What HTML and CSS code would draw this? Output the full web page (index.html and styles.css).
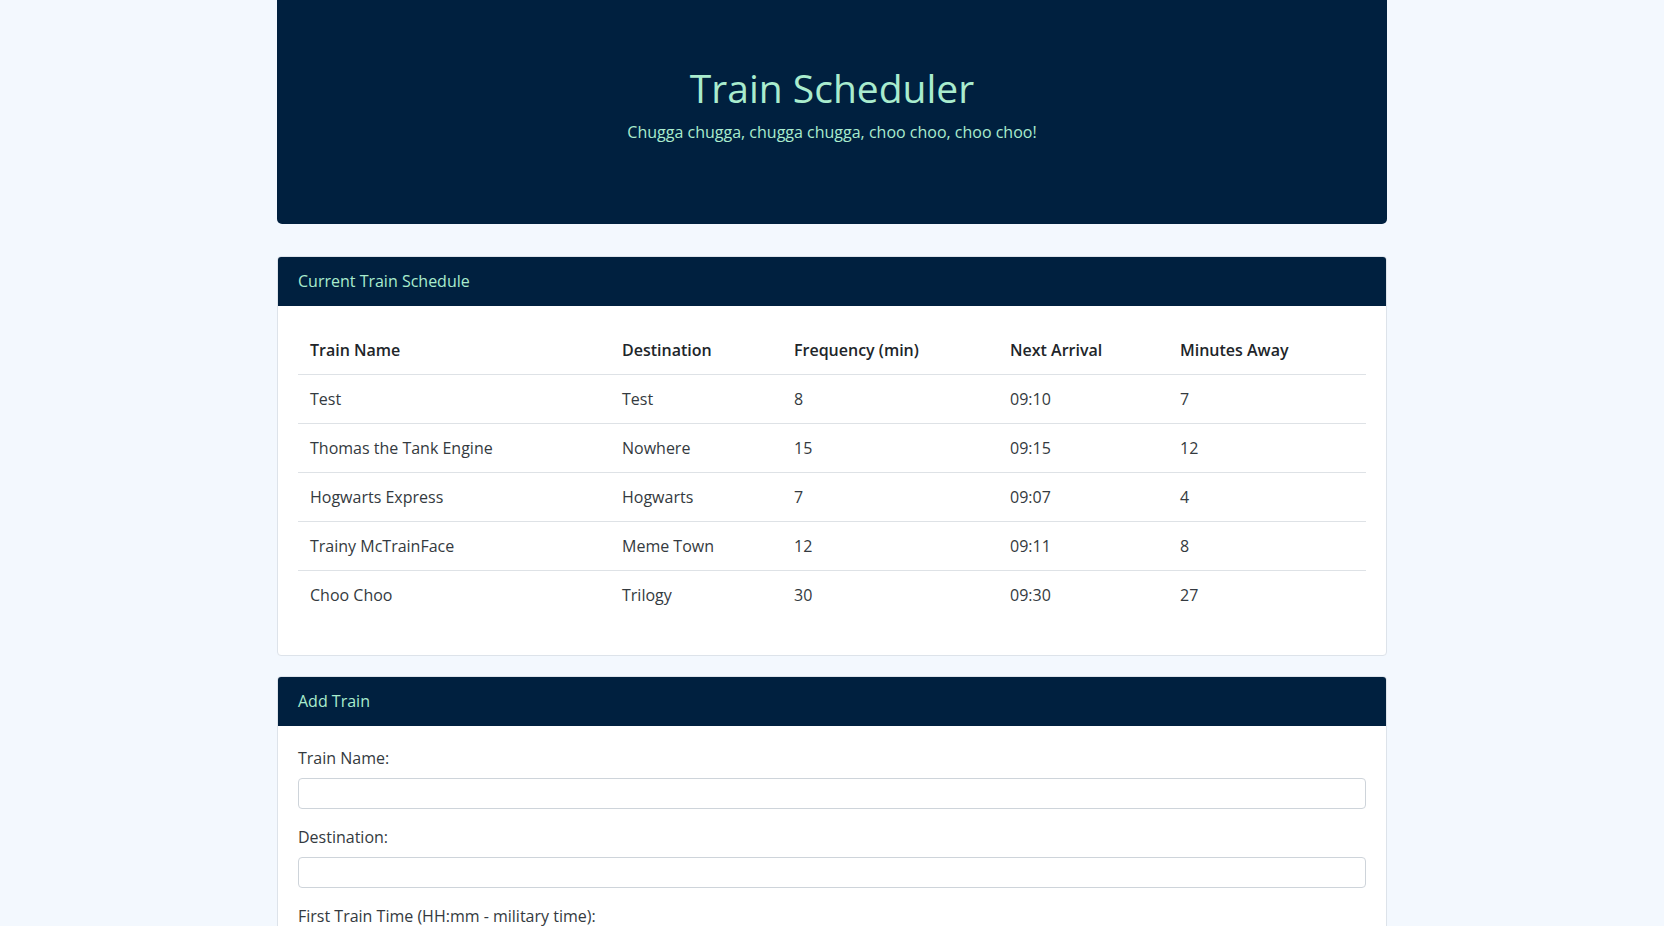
FILE: index.html
```html
<!DOCTYPE html>
<html lang="en">
<head>
<meta charset="utf-8">
<title>Train Scheduler</title>
<link rel="stylesheet" href="styles.css">
</head>
<body>
<div class="container">
  <header class="jumbotron">
    <h1 class="jumbo-title">Train Scheduler</h1>
    <p class="jumbo-lead">Chugga chugga, chugga chugga, choo choo, choo choo!</p>
  </header>

  <section class="card">
    <div class="card-header">Current Train Schedule</div>
    <div class="card-body">
      <table class="schedule">
        <colgroup>
          <col class="c1"><col class="c2"><col class="c3"><col class="c4"><col class="c5">
        </colgroup>
        <thead>
          <tr><th>Train Name</th><th>Destination</th><th>Frequency (min)</th><th>Next Arrival</th><th>Minutes Away</th></tr>
        </thead>
        <tbody>
          <tr><td>Test</td><td>Test</td><td>8</td><td>09:10</td><td>7</td></tr>
          <tr><td>Thomas the Tank Engine</td><td>Nowhere</td><td>15</td><td>09:15</td><td>12</td></tr>
          <tr><td>Hogwarts Express</td><td>Hogwarts</td><td>7</td><td>09:07</td><td>4</td></tr>
          <tr><td>Trainy McTrainFace</td><td>Meme Town</td><td>12</td><td>09:11</td><td>8</td></tr>
          <tr><td>Choo Choo</td><td>Trilogy</td><td>30</td><td>09:30</td><td>27</td></tr>
        </tbody>
      </table>
    </div>
  </section>

  <section class="card">
    <div class="card-header">Add Train</div>
    <div class="card-body">
      <form class="train-form">
        <div class="form-group">
          <label for="name">Train Name:</label>
          <input id="name" class="form-control" type="text">
        </div>
        <div class="form-group">
          <label for="dest">Destination:</label>
          <input id="dest" class="form-control" type="text">
        </div>
        <div class="form-group">
          <label for="first">First Train Time (HH:mm - military time):</label>
          <input id="first" class="form-control" type="text">
        </div>
        <div class="form-group">
          <label for="freq">Frequency (min):</label>
          <input id="freq" class="form-control" type="text">
        </div>
      </form>
    </div>
  </section>
</div>
</body>
</html>
```

FILE: styles.css
```css
* { box-sizing: border-box; }

html, body {
  margin: 0;
  padding: 0;
}

body {
  background: #f3f8fe;
  font-family: "Open Sans", "Noto Sans", Arial, sans-serif;
  font-size: 16px;
  line-height: 1.5;
  color: #343a40;
}

.container {
  max-width: 1140px;
  margin: 0 auto;
  padding: 0 15px;
}

.jumbotron {
  background: #00203f;
  border-radius: 0 0 5px 5px;
  padding: 64px 32px;
  margin-bottom: 32px;
  text-align: center;
  color: #a9ecce;
}

.jumbo-title {
  margin: 0 0 8px;
  font-size: 39px;
  font-weight: 400;
  line-height: 48px;
}

.jumbo-lead {
  margin: 0 0 16px;
  font-size: 16px;
  line-height: 24px;
}

.card {
  background: #fff;
  border: 1px solid #dde3ea;
  border-radius: 4px;
  margin-bottom: 20px;
  overflow: hidden;
}

.card-header {
  background: #00203f;
  color: #a9ecce;
  padding: 12px 20px;
  font-size: 16px;
  line-height: 24px;
  border-bottom: 1px solid #00203f;
}

.card-body {
  padding: 20px;
}

.schedule {
  width: 100%;
  border-collapse: collapse;
  table-layout: fixed;
  margin-bottom: 16px;
  font-size: 16px;
}

.c1 { width: 312px; }
.c2 { width: 172px; }
.c3 { width: 216px; }
.c4 { width: 170px; }
.c5 { width: 198px; }

.schedule th,
.schedule td {
  text-align: left;
  padding: 12px;
  line-height: 24px;
  vertical-align: top;
}

.schedule th {
  font-weight: 600;
  color: #212529;
  border-bottom: 1px solid #dee2e6;
}

.schedule td {
  border-top: 1px solid #dee2e6;
}

.schedule thead + tbody tr:first-child td {
  border-top: 0;
}

.train-form .form-group {
  margin-bottom: 16px;
}

.train-form label {
  display: block;
  margin-bottom: 8px;
  font-size: 16px;
  line-height: 24px;
}

.form-control {
  display: block;
  width: 100%;
  height: 31px;
  border: 1px solid #ced4da;
  border-radius: 4px;
  background: #fff;
  padding: 4px 12px;
  font-family: inherit;
  font-size: 16px;
}
```
